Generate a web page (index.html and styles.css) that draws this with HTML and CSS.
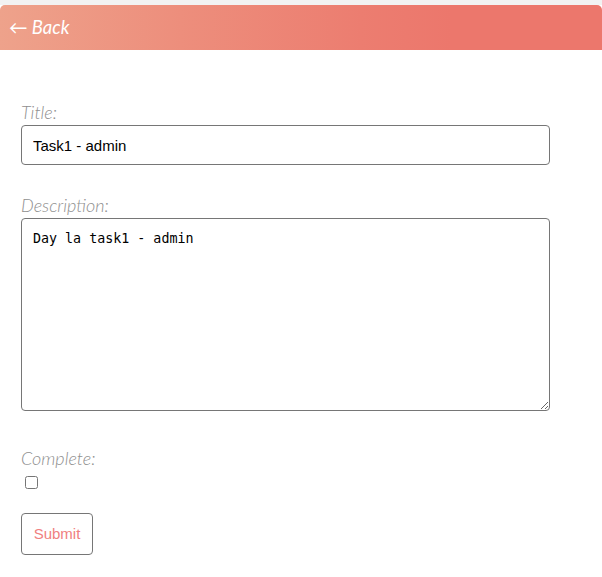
FILE: index.html
```html
<!DOCTYPE html>
<html lang="en">
<head>
<meta charset="utf-8">
<title>Edit Task</title>
<link rel="stylesheet" href="styles.css">
</head>
<body>
<div class="page">
  <header class="topbar">
    <a class="back" href="#">&larr; Back</a>
  </header>
  <main class="content">
    <form class="task-form">
      <div class="field">
        <label class="field-label" for="title">Title:</label>
        <input class="text-input" id="title" type="text" value="Task1 - admin">
      </div>
      <div class="field">
        <label class="field-label" for="desc">Description:</label>
        <textarea class="text-area" id="desc">Day la task1 - admin</textarea>
      </div>
      <div class="field field-complete">
        <label class="field-label" for="complete">Complete:</label>
        <input class="check" id="complete" type="checkbox">
      </div>
      <button class="submit" type="button">Submit</button>
    </form>
  </main>
</div>
</body>
</html>
```
FILE: styles.css
```css
html, body {
  margin: 0;
  padding: 0;
  background: #ffffff;
}

.page {
  padding-top: 5px;
  background: linear-gradient(to bottom, #f2f2f2 0, #f2f2f2 5px, #ffffff 5px);
  min-height: 577px;
  box-sizing: border-box;
}

.topbar {
  height: 45px;
  border-radius: 5px 5px 0 0;
  background: linear-gradient(90deg, #eea28b 0%, #ed8e7c 30%, #ec7d70 60%, #ec776c 75%, #ec776c 100%);
  padding-left: 9px;
  display: flex;
  align-items: center;
}

.back {
  font-family: Lato, "Open Sans", sans-serif;
  font-style: italic;
  font-size: 18.5px;
  line-height: 45px;
  color: #ffffff;
  text-decoration: none;
}

.content {
  padding: 52px 21px 0;
}

.task-form {
  display: flex;
  flex-direction: column;
  align-items: flex-start;
}

.field {
  display: flex;
  flex-direction: column;
  align-items: flex-start;
}

.field + .field {
  margin-top: 30px;
}

.field-complete {
  margin-top: 37px !important;
}

.field-label {
  font-family: Lato, "Open Sans", sans-serif;
  font-weight: 300;
  font-style: italic;
  font-size: 18px;
  line-height: 20px;
  color: #8f8f8f;
  margin-bottom: 3px;
}

.text-input {
  box-sizing: border-box;
  width: 529px;
  height: 40px;
  margin: 0;
  padding: 0 11px;
  border: 1px solid #767676;
  border-radius: 4px;
  font-family: "Liberation Sans", Arial, sans-serif;
  font-size: 15px;
  color: #000000;
  background: #ffffff;
}

.text-area {
  box-sizing: border-box;
  width: 529px;
  height: 193px;
  margin: 0;
  padding: 12px 11px 10px;
  border: 1px solid #767676;
  border-radius: 4px;
  font-family: "DejaVu Sans Mono", monospace;
  font-size: 13.33px;
  color: #000000;
  background: #ffffff;
  resize: both;
}

.check {
  width: 13px;
  height: 13px;
  margin: 5px 0 0 4px;
}

.submit {
  margin-top: 24px;
  box-sizing: border-box;
  width: 72px;
  height: 42px;
  padding: 0 0 2px;
  border: 1px solid #767676;
  border-radius: 4px;
  background: #ffffff;
  font-family: "Liberation Sans", Arial, sans-serif;
  font-size: 15px;
  color: #f08080;
}
```
